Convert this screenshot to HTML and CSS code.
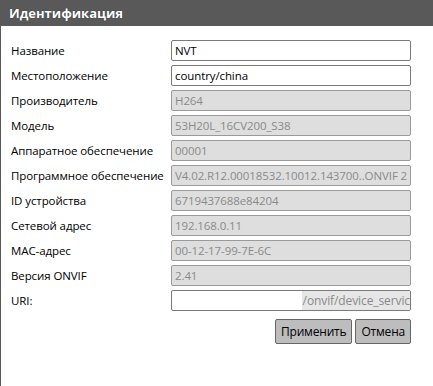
FILE: index.html
```html
<!DOCTYPE html>
<html lang="ru">
<head>
    <meta charset="UTF-8">
    <meta name="viewport" content="width=device-width, initial-scale=1.0">
    <title>Идентификация</title>
    <link rel="stylesheet" href="styles.css">
</head>
<body>
    <div class="title-bar">Идентификация</div>

    <div class="panel">
        <div class="form">
            <label>Название</label>
            <input type="text" value="NVT">

            <label>Местоположение</label>
            <input type="text" value="country/china">

            <label>Производитель</label>
            <input type="text" value="H264" disabled>

            <label>Модель</label>
            <input type="text" value="53H20L_16CV200_S38" disabled>

            <label>Аппаратное обеспечение</label>
            <input type="text" value="00001" disabled>

            <label>Программное обеспечение</label>
            <input type="text" value="V4.02.R12.00018532.10012.143700..ONVIF 2.41" disabled>

            <label>ID устройства</label>
            <input type="text" value="6719437688e84204" disabled>

            <label>Сетевой адрес</label>
            <input type="text" value="192.168.0.11" disabled>

            <label>MAC-адрес</label>
            <input type="text" value="00-12-17-99-7E-6C" disabled>

            <label>Версия ONVIF</label>
            <input type="text" value="2.41" disabled>

            <label>URI:</label>
            <div class="uri-field"><span class="uri-text">/onvif/device_servic</span></div>
        </div>

        <div class="actions">
            <button class="btn">Применить</button>
            <button class="btn">Отмена</button>
        </div>
    </div>
</body>
</html>
```

FILE: styles.css
```css
body {
    margin: 0;
    font-family: "Open Sans", Arial, sans-serif;
    font-size: 11.5px;
    color: #000;
    background: #fff;
}
.title-bar {
    height: 26px;
    line-height: 26px;
    padding-left: 9px;
    background-color: #595959;
    color: #fff;
    font-weight: bold;
    font-size: 13px;
    text-shadow: 0 0 1px #222;
}
.panel {
    border-left: 1px solid #595959;
    height: 360px;
    padding: 14px 0 0 10px;
    box-sizing: border-box;
}
.form {
    display: grid;
    grid-template-columns: 160px 240px;
    row-gap: 4px;
    align-items: center;
}
.form label {
    font-size: 11.5px;
    white-space: nowrap;
    letter-spacing: -0.1px;
}
.form input,
.uri-field {
    box-sizing: border-box;
    height: 21px;
    margin: 0;
    padding: 0 3px;
    border: 1px solid #7a7a7a;
    border-radius: 2px;
    font-family: "Open Sans", Arial, sans-serif;
    font-size: 11.5px;
    letter-spacing: -0.1px;
    color: #000;
    background: #fff;
}
.form input:disabled {
    background-color: #dedede;
    color: #8a8a8a;
    border-color: #9a9a9a;
}
.uri-field {
    display: flex;
    justify-content: flex-end;
    align-items: stretch;
    overflow: hidden;
    padding: 0;
    white-space: nowrap;
}
.uri-text {
    display: flex;
    align-items: center;
    padding-left: 1px;
    background-color: #e6e6e6;
    color: #8a8a8a;
    font-size: 12px;
}
.actions {
    display: flex;
    justify-content: flex-end;
    gap: 3px;
    width: 400px;
    margin-top: 8px;
}
.btn {
    height: 25px;
    padding: 0 5px;
    border: 1px solid #666;
    border-radius: 2px;
    background-color: #bdbdbd;
    font-family: "Open Sans", Arial, sans-serif;
    font-size: 12px;
    letter-spacing: -0.2px;
    color: #000;
    cursor: pointer;
}
```
